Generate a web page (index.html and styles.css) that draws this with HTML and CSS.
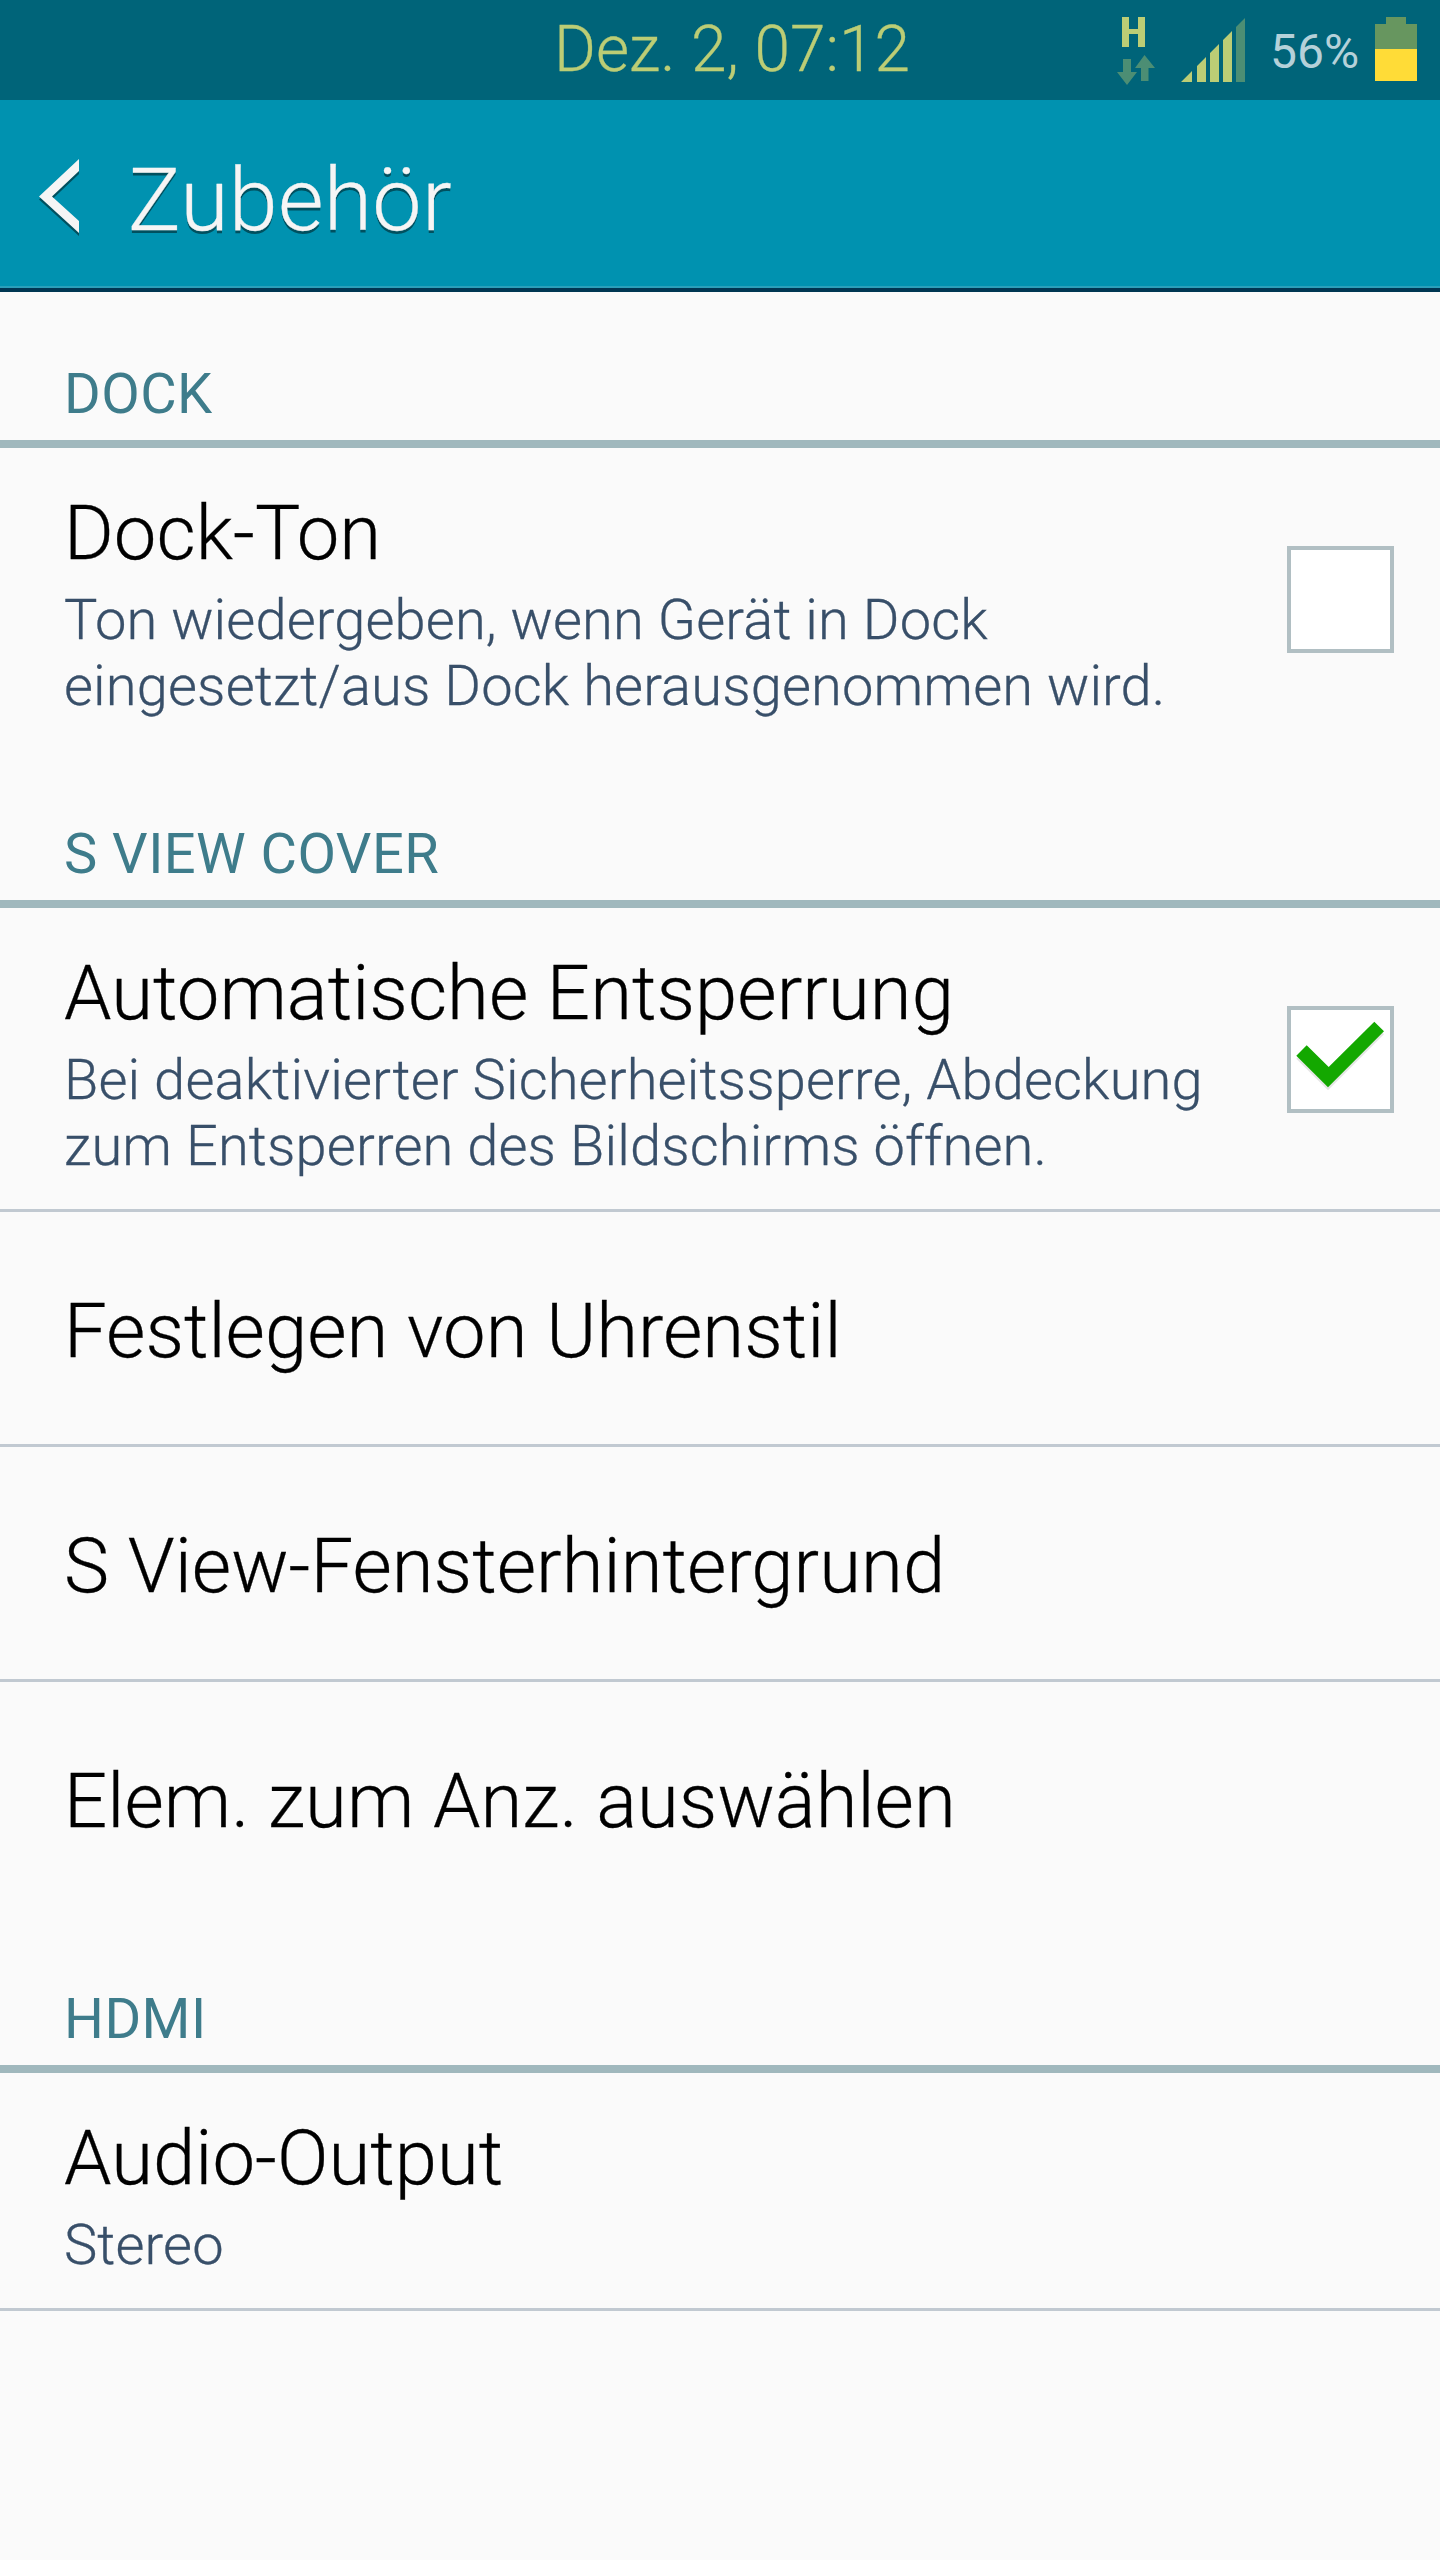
FILE: index.html
```html
<!DOCTYPE html>
<html lang="de">
<head>
<meta charset="utf-8">
<title>Zubehör</title>
<link rel="stylesheet" href="styles.css">
</head>
<body>
<div class="status">
  <span class="clock">Dez. 2, 07:12</span>
  <div class="tray">
    <svg class="network" width="38" height="68" viewBox="0 0 38 68"><path fill="#bccd75" d="M5 0h7v12h9V0h7v30h-7V17h-9v13H5z"/><path fill="#4c8e74" d="M6 42h8v13h6L10 68 0 55h6zM24 64V51h-6l9.500-13L38 51h-6.500v13z"/></svg>
    <svg class="signal" width="64" height="64" viewBox="0 0 64 64"><path fill="#bccd75" d="M0 64 11 53v11zM16 48l9-9v25h-9zM29 35l9-9v38h-9zM42 22l9-9v51h-9z"/><path fill="#4c8e74" d="M55 9l9-9v64h-9z"/></svg>
    <span class="percent">56%</span>
    <svg class="battery" width="42" height="64" viewBox="0 0 42 64"><path fill="#67965f" d="M11 0h20v7h11v25H0V7h11z"/><path fill="#ffdc37" d="M0 32h42v32H0z"/></svg>
  </div>
</div>
<header class="bar">
  <svg class="back" width="40" height="78" viewBox="0 0 40 78"><path fill="#00505f" d="M40 3v12L13 40.500 40 65v12L0 40.500z"/><path fill="#f5f5f5" d="M40 0v12L13 37.500 40 62v12L0 37.500z"/></svg>
  <h1 class="title">Zubehör</h1>
</header>
<main>
  <h2 class="section">DOCK</h2>
  <div class="row last">
    <div class="text">
      <div class="label">Dock-Ton</div>
      <div class="note">Ton wiedergeben, wenn Gerät in Dock<br>eingesetzt/aus Dock herausgenommen wird.</div>
    </div>
    <div class="check"></div>
  </div>
  <h2 class="section">S VIEW COVER</h2>
  <div class="row">
    <div class="text">
      <div class="label">Automatische Entsperrung</div>
      <div class="note">Bei deaktivierter Sicherheitssperre, Abdeckung<br>zum Entsperren des Bildschirms öffnen.</div>
    </div>
    <div class="check"><svg width="99" height="99" viewBox="0 0 99 99"><path fill="#e6e6e6" d="M5.300 48.700 15.700 38.300 37.700 60 83.300 14.700 93 24.300 37 80.300z"/><path fill="#13a800" d="M5.300 45.700 15.700 35.300 37.700 57 83.300 11.700 93 21.300 37 77.300z"/></svg></div>
  </div>
  <div class="row single"><div class="label">Festlegen von Uhrenstil</div></div>
  <div class="row single"><div class="label">S View-Fensterhintergrund</div></div>
  <div class="row single last"><div class="label">Elem. zum Anz. auswählen</div></div>
  <h2 class="section">HDMI</h2>
  <div class="row">
    <div class="text">
      <div class="label">Audio-Output</div>
      <div class="note">Stereo</div>
    </div>
  </div>
</main>
</body>
</html>
```
FILE: styles.css
```css
* { box-sizing: border-box; }
body {
  margin: 0;
  min-height: 2560px;
  background: #fafafa;
  color: #000;
  font-family: Roboto, "Liberation Sans", sans-serif;
  font-weight: 300;
}
svg { display: block; flex: none; }

.status {
  display: flex;
  justify-content: space-between;
  height: 100px;
  padding: 0 23px 0 554px;
  background: #006479;
}
.clock {
  font-size: 64px;
  line-height: 100px;
  color: #bccd75;
  -webkit-text-stroke: 0.3px;
}
.tray {
  display: flex;
  align-items: flex-start;
  padding-top: 17px;
}
.signal { margin: 1px 0 0 26px; }
.percent {
  width: 105px;
  margin: -15px 0 0 25px;
  font-size: 48px;
  font-weight: 400;
  line-height: 100px;
  color: #b5d1d9;
}

.bar {
  display: flex;
  align-items: flex-start;
  height: 192px;
  padding-left: 39px;
  background: #0092b0;
  border-bottom: 4px solid #003652;
  box-shadow: inset 0 -2px #2a9fba;
}
.back { margin-top: 59px; }
.title {
  margin: 0 0 0 49px;
  font-size: 88px;
  font-weight: 300;
  line-height: 199px;
  letter-spacing: 0.3px;
  color: #f5f5f5;
  text-shadow: 0 3px 0 #00505f;
  -webkit-text-stroke: 0.3px;
}

.section {
  height: 156px;
  margin: 0;
  padding: 72px 64px 0;
  border-bottom: 8px solid #a0b8bd;
  font-size: 56px;
  font-weight: 400;
  line-height: 60px;
  letter-spacing: 0.45px;
  color: #3e7c8b;
}

.row {
  display: flex;
  align-items: flex-start;
  justify-content: space-between;
  padding: 40px 46px 30px 64px;
  border-bottom: 3px solid #c1c9d1;
}
.row.last { border-bottom-color: transparent; }
.row.single {
  align-items: center;
  height: 235px;
  padding-top: 5px;
  padding-bottom: 0;
}
.label {
  font-size: 76px;
  line-height: 90px;
  letter-spacing: 0.06px;
  white-space: nowrap;
  -webkit-text-stroke: 0.3px;
}
.note {
  margin-top: 9px;
  font-size: 56px;
  line-height: 66px;
  letter-spacing: 0.15px;
  white-space: nowrap;
  color: #384f69;
  -webkit-text-stroke: 0.3px;
}
.check {
  flex: none;
  width: 107px;
  height: 107px;
  margin-top: 58px;
  border: 4px solid #b1bfc3;
  background: #fff;
}
```
